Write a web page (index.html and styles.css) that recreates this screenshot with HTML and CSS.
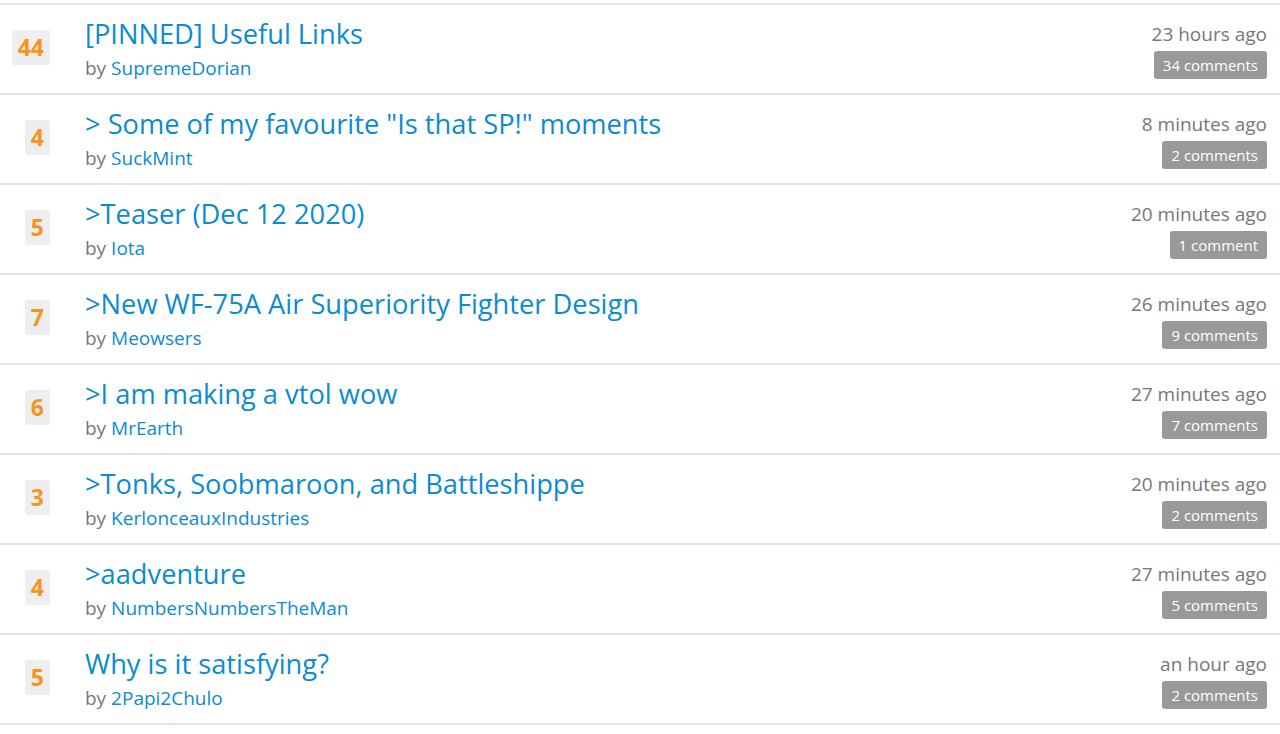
FILE: index.html
```html
<!DOCTYPE html>
<html lang="en">
<head>
    <meta charset="UTF-8">
    <title>Forum</title>
    <link rel="stylesheet" href="styles.css">
</head>
<body>
    <ul class="post-list">
        <li class="post">
            <div class="score"><span>44</span></div>
            <div class="post-main">
                <a class="post-title" href="#">[PINNED] Useful Links</a>
                <div class="post-author">by <a href="#">SupremeDorian</a></div>
            </div>
            <div class="post-meta">
                <div class="post-time">23 hours ago</div>
                <a class="comments" href="#">34 comments</a>
            </div>
        </li>
        <li class="post">
            <div class="score"><span>4</span></div>
            <div class="post-main">
                <a class="post-title" href="#">&gt; Some of my favourite "Is that SP!" moments</a>
                <div class="post-author">by <a href="#">SuckMint</a></div>
            </div>
            <div class="post-meta">
                <div class="post-time">8 minutes ago</div>
                <a class="comments" href="#">2 comments</a>
            </div>
        </li>
        <li class="post">
            <div class="score"><span>5</span></div>
            <div class="post-main">
                <a class="post-title" href="#">&gt;Teaser (Dec 12 2020)</a>
                <div class="post-author">by <a href="#">Iota</a></div>
            </div>
            <div class="post-meta">
                <div class="post-time">20 minutes ago</div>
                <a class="comments" href="#">1 comment</a>
            </div>
        </li>
        <li class="post">
            <div class="score"><span>7</span></div>
            <div class="post-main">
                <a class="post-title" href="#">&gt;New WF-75A Air Superiority Fighter Design</a>
                <div class="post-author">by <a href="#">Meowsers</a></div>
            </div>
            <div class="post-meta">
                <div class="post-time">26 minutes ago</div>
                <a class="comments" href="#">9 comments</a>
            </div>
        </li>
        <li class="post">
            <div class="score"><span>6</span></div>
            <div class="post-main">
                <a class="post-title" href="#">&gt;I am making a vtol wow</a>
                <div class="post-author">by <a href="#">MrEarth</a></div>
            </div>
            <div class="post-meta">
                <div class="post-time">27 minutes ago</div>
                <a class="comments" href="#">7 comments</a>
            </div>
        </li>
        <li class="post">
            <div class="score"><span>3</span></div>
            <div class="post-main">
                <a class="post-title" href="#">&gt;Tonks, Soobmaroon, and Battleshippe</a>
                <div class="post-author">by <a href="#">KerlonceauxIndustries</a></div>
            </div>
            <div class="post-meta">
                <div class="post-time">20 minutes ago</div>
                <a class="comments" href="#">2 comments</a>
            </div>
        </li>
        <li class="post">
            <div class="score"><span>4</span></div>
            <div class="post-main">
                <a class="post-title" href="#">&gt;aadventure</a>
                <div class="post-author">by <a href="#">NumbersNumbersTheMan</a></div>
            </div>
            <div class="post-meta">
                <div class="post-time">27 minutes ago</div>
                <a class="comments" href="#">5 comments</a>
            </div>
        </li>
        <li class="post">
            <div class="score"><span>5</span></div>
            <div class="post-main">
                <a class="post-title" href="#">Why is it satisfying?</a>
                <div class="post-author">by <a href="#">2Papi2Chulo</a></div>
            </div>
            <div class="post-meta">
                <div class="post-time">an hour ago</div>
                <a class="comments" href="#">2 comments</a>
            </div>
        </li>
    </ul>
</body>
</html>
```

FILE: styles.css
```css
body {
    margin: 0;
    font-family: 'Open Sans', sans-serif;
    background-color: #fff;
    color: #777;
}

a {
    color: #0b8bd2;
    text-decoration: none;
}

.post-list {
    list-style: none;
    margin: 0;
    padding: 3px 0 0 0;
    border-bottom: 2px solid #e4e4e4;
}

.post {
    display: flex;
    align-items: flex-start;
    height: 88px;
    border-top: 2px solid #e4e4e4;
}

/* Score box on the left */
.score {
    width: 50px;
    padding-top: 25px;
    display: flex;
    justify-content: flex-end;
    flex-shrink: 0;
}

.score span {
    background-color: #eee;
    color: #f7931e;
    font-weight: bold;
    font-size: 23px;
    line-height: 35px;
    padding: 0 6px;
    border-radius: 2px;
}

.post-main {
    flex: 1;
    margin-left: 35px;
    padding-top: 12px;
}

.post-title {
    display: block;
    font-size: 27.25px;
    line-height: 34px;
    margin-bottom: 4px;
}

.post-author {
    font-size: 19px;
    line-height: 26px;
}

.post-meta {
    text-align: right;
    padding: 16px 13px 0 0;
}

.post-time {
    font-size: 19px;
    line-height: 26px;
    margin-bottom: 4px;
}

.comments {
    display: inline-block;
    background-color: #999;
    color: #fff;
    font-size: 15px;
    line-height: 28px;
    padding: 0 9px;
    border-radius: 3px;
}
```
